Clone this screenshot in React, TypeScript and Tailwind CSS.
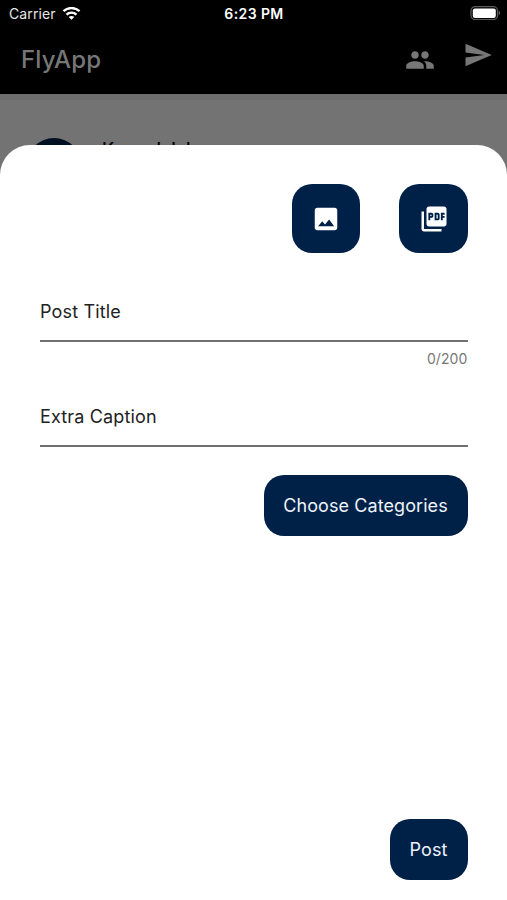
import { MdPeople, MdPictureAsPdf, MdSend } from "react-icons/md";

function StatusBar() {
  return (
    <div className="grid grid-cols-3 items-center h-7 pl-[9px] pr-[6px] text-white text-[14px] leading-7">
      <div className="flex items-center gap-[6px]">
        <span className="tracking-[0.1px] text-[#e6e6e6]">Carrier</span>
        <svg width="19" height="14" viewBox="0 0 18 14" fill="none" stroke="white" strokeWidth="2.3">
          <path d="M1 4.200C5.500 -.1 12.500 -.1 17 4.200" />
          <path d="M4 7.600C6.800 4.900 11.200 4.900 14 7.600" />
          <path d="M9 12.800L6.200 10C7.800 8.500 10.200 8.500 11.800 10Z" fill="white" stroke="none" />
        </svg>
      </div>
      <span className="-ml-[2px] text-center font-semibold tracking-[0.4px] whitespace-nowrap">6:23 PM</span>
      <svg className="justify-self-end -mt-[2px]" width="31" height="14" viewBox="0 0 31 14">
        <rect x="1" y=".7" width="26.500" height="12.800" rx="4" fill="none" stroke="#5c5c5c" strokeWidth="1.200" />
        <rect x="2.800" y="2.400" width="23" height="9.500" rx="2.200" fill="white" />
        <path d="M28.600 4.800C30.700 5.500 30.700 8.500 28.600 9.200Z" fill="#5c5c5c" />
      </svg>
    </div>
  );
}

function Header() {
  return (
    <header className="bg-black h-[94px]">
      <StatusBar />
      <div className="flex items-start pl-[21px] pr-[14.5px] text-[#777777]">
        <h1 className="flex-1 mt-[14px] text-[24px] leading-9 font-medium tracking-[0.15px]">FlyApp</h1>
        <MdPeople className="mt-[16.5px] mr-7 size-[30px]" />
        <MdSend className="mt-3 size-[30px]" />
      </div>
    </header>
  );
}

function ImageIcon() {
  return (
    <svg className="size-[30px]" viewBox="0 0 24 24" fill="currentColor">
      <path d="M21 19V5c0-1.100-.9-2-2-2H5c-1.100 0-2 .9-2 2v14c0 1.100.9 2 2 2h14c1.100 0 2-.9 2-2zM9 13.700l2.200 2.600 3.300-3.900 4 5.400H5.700z" />
    </svg>
  );
}

function Field({ label }: { label: string }) {
  return (
    <div className="h-[51px] border-b-2 border-[#707070] pl-[0.5px] text-[18px] leading-[42px] tracking-[0.15px] text-[#222222]">
      {label}
    </div>
  );
}

export default function App() {
  return (
    <div className="relative h-[900px] w-[507px] overflow-hidden bg-[#737373] font-['Inter',sans-serif]">
      <Header />

      {/* Feed behind the sheet */}
      <div className="border-t-[6px] border-[#6e6e6e]">
        <div className="flex items-start pl-[26px] pt-[38px]">
          <div className="size-14 rounded-full bg-[#001023]" />
          <span className="ml-5 text-[18px] leading-6 font-medium text-black">Kaunalalal</span>
        </div>
      </div>

      {/* New post sheet */}
      <div className="absolute inset-x-0 top-[145px] bottom-0 flex flex-col rounded-t-[30px] bg-white px-[39.500px] pt-[39px] pb-5">
        <div className="flex justify-end gap-[39px] text-white">
          <button className="flex size-[68.5px] items-center justify-center rounded-[20px] bg-[#002147] pt-px">
            <ImageIcon />
          </button>
          <button className="flex size-[68.5px] items-center justify-center rounded-[20px] bg-[#002147] pt-px pl-px">
            <MdPictureAsPdf className="size-[30px]" />
          </button>
        </div>

        <div className="mt-[38.5px]">
          <Field label="Post Title" />
          <p className="h-[54px] pt-[8px] text-right text-[14px] leading-[18px] tracking-[0.1px] text-[#777777]">0/200</p>
          <Field label="Extra Caption" />
        </div>

        <button className="mt-7 h-[61px] w-[204px] self-end rounded-[20px] bg-[#002147] text-[18px] tracking-[0.08px] text-[#eef3fa]">
          Choose Categories
        </button>
        <button className="mt-auto h-[61px] w-[78px] self-end rounded-[20px] bg-[#002147] text-[18px] tracking-[0.15px] text-[#eef3fa]">
          Post
        </button>
      </div>
    </div>
  );
}
